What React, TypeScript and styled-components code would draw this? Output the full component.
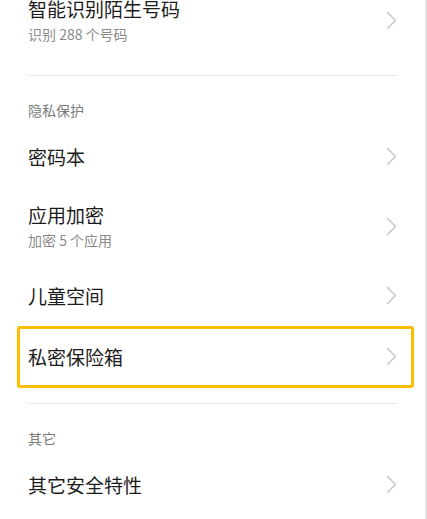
import styled, { createGlobalStyle } from 'styled-components'

const GlobalStyle = createGlobalStyle`
  html, body {
    margin: 0;
    padding: 0;
    background: #ffffff;
  }
  body {
    font-family: "Noto Sans CJK SC", "Noto Sans", sans-serif;
    -webkit-font-smoothing: antialiased;
  }
`

const Page = styled.div`
  height: 519px;
  overflow: hidden;
  box-sizing: border-box;
  border-right: 2px solid #e2e2e2;
  width: 427px;
`

const Scroller = styled.div`
  margin-top: -19px;
  padding: 0 28px;
`

const Group = styled.section`
  padding-bottom: 16px;
`

const Divider = styled.div`
  height: 1px;
  background: #e8e8e8;
`

const SectionTitle = styled.div`
  padding: 24px 0 6px;
  font-size: 14px;
  line-height: 20px;
  color: #7a7a7a;
`

const Row = styled.div<{ $tall?: boolean; $highlight?: boolean }>`
  position: relative;
  display: flex;
  align-items: center;
  justify-content: space-between;
  height: ${(p) => (p.$tall ? 78 : 61)}px;

  ${(p) =>
    p.$highlight &&
    `
    &::after {
      content: '';
      position: absolute;
      left: -11px;
      right: -17px;
      top: 0;
      bottom: -1px;
      border: 3px solid #fdbd00;
      border-radius: 3px;
      pointer-events: none;
    }
  `}
`

const Texts = styled.div`
  display: flex;
  flex-direction: column;
  gap: 2px;
`

const Title = styled.div`
  font-size: 19px;
  line-height: 26px;
  color: #1c1c1c;
`

const Sub = styled.div`
  font-size: 14px;
  line-height: 20px;
  color: #8a8a8a;
`

const Chevron = () => (
  <svg width="11" height="19" viewBox="0 0 11 19" fill="none">
    <path d="M1.5 1.5 L9.5 9.5 L1.5 17.5" stroke="#c2c2c2" strokeWidth="1.4" strokeLinecap="round" strokeLinejoin="round" />
  </svg>
)

type Item = { title: string; sub?: string; highlight?: boolean }

const groups: { header?: string; items: Item[] }[] = [
  { items: [{ title: '智能识别陌生号码', sub: '识别 288 个号码' }] },
  {
    header: '隐私保护',
    items: [
      { title: '密码本' },
      { title: '应用加密', sub: '加密 5 个应用' },
      { title: '儿童空间' },
      { title: '私密保险箱', highlight: true },
    ],
  },
  { header: '其它', items: [{ title: '其它安全特性' }] },
]

const App = () => {
  return (
    <Page>
      <GlobalStyle />
      <Scroller>
        {groups.map((g, gi) => (
          <div key={gi}>
            {gi > 0 && <Divider />}
            <Group>
              {g.header && <SectionTitle>{g.header}</SectionTitle>}
              {g.items.map((it) => (
                <Row key={it.title} $tall={!!it.sub} $highlight={it.highlight}>
                  <Texts>
                    <Title>{it.title}</Title>
                    {it.sub && <Sub>{it.sub}</Sub>}
                  </Texts>
                  <Chevron />
                </Row>
              ))}
            </Group>
          </div>
        ))}
      </Scroller>
    </Page>
  )
}

export default App
